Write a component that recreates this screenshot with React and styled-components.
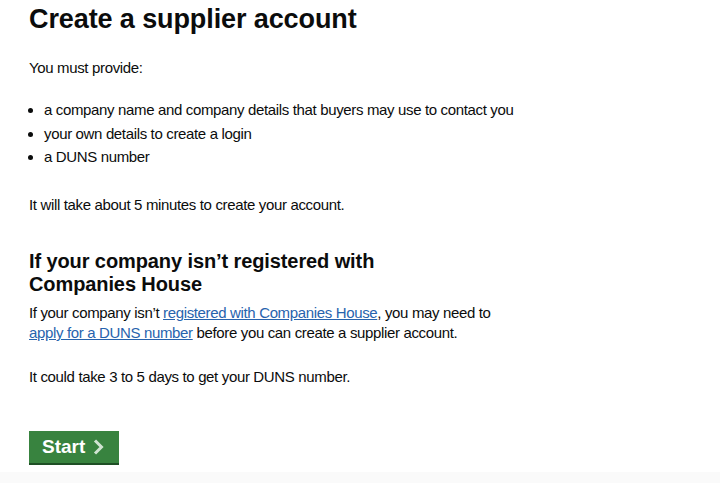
import React from "react";
import styled, { createGlobalStyle } from "styled-components";

const Global = createGlobalStyle`
  html, body { margin: 0; padding: 0; background: #ffffff; }
  body { font-family: "Liberation Sans", Arial, sans-serif; color: #0b0c0c; }
`;

const Page = styled.div`
  display: flex;
  flex-direction: column;
  min-height: 483px;
`;

const Main = styled.main`
  padding: 0 29px;
  flex: 1;
`;

const H1 = styled.h1`
  font-size: 27px;
  line-height: 38px;
  font-weight: 700;
  margin: 0 0 20px;
  letter-spacing: -0.1px;
`;

const H2 = styled.h2`
  font-size: 20px;
  line-height: 23px;
  font-weight: 700;
  margin: 0 0 7px;
  max-width: 370px;
  letter-spacing: -0.1px;
`;

const P = styled.p`
  font-size: 15px;
  line-height: 20px;
  letter-spacing: -0.35px;
  margin: 0 0 ${(p) => p.$mb ?? 24}px;
  max-width: ${(p) => p.$max ?? "none"};
`;

const List = styled.ul`
  margin: 0 0 28px;
  padding-left: 15px;
  font-size: 15px;
  line-height: 20px;
  letter-spacing: -0.35px;
`;

const Item = styled.li`
  margin-bottom: 3.5px;
`;

const Link = styled.a`
  color: #2763ad;
  text-decoration: underline;
`;

const StartButton = styled.button`
  display: inline-flex;
  align-items: center;
  gap: 8px;
  margin-top: 44px;
  padding: 6px 15px 6px 13px;
  background: #38833f;
  color: #fff;
  border: none;
  box-shadow: 0 2px 0 #1e4f25;
  font-family: "Liberation Sans", Arial, sans-serif;
  font-weight: 700;
  font-size: 19px;
  line-height: 20px;
  height: 32px;
`;

const Footer = styled.footer`
  height: 11px;
  background: #fafafa;
`;

export default function App() {
  return (
    <Page>
      <Global />
      <Main>
        <H1>Create a supplier account</H1>
        <P $mb={22}>You must provide:</P>
        <List>
          <Item>a company name and company details that buyers may use to contact you</Item>
          <Item>your own details to create a login</Item>
          <Item>a DUNS number</Item>
        </List>
        <P $mb={35}>It will take about 5 minutes to create your account.</P>
        <H2>If your company isn’t registered with Companies House</H2>
        <P $mb={24} $max="480px">
          If your company isn’t <Link href="#">registered with Companies House</Link>, you may need to{" "}
          <Link href="#">apply for a DUNS number</Link> before you can create a supplier account.
        </P>
        <P $mb={0}>It could take 3 to 5 days to get your DUNS number.</P>
        <StartButton>
          Start
          <svg width="11" height="16" viewBox="0 0 11 16" aria-hidden="true">
            <path d="M2 1.5 L8.5 8 L2 14.5" fill="none" stroke="#cfe3d1" strokeWidth="3" />
          </svg>
        </StartButton>
      </Main>
      <Footer />
    </Page>
  );
}
